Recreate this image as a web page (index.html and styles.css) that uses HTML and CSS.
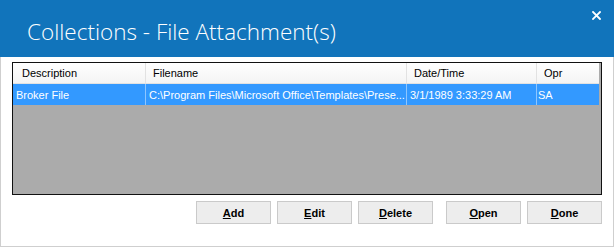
FILE: index.html
```html
<!DOCTYPE html>
<html lang="en">
<head>
  <meta charset="UTF-8">
  <title>Collections - File Attachment(s)</title>
  <link rel="stylesheet" href="styles.css">
</head>
<body>
  <div class="window">
    <div class="titlebar">
      <h1>Collections - File Attachment(s)</h1>
      <span class="close">
        <svg width="9" height="9" viewBox="0 0 9 9">
          <path d="M1 1 L8 8 M8 1 L1 8" stroke="#fff" stroke-width="1.8" stroke-linecap="square"/>
        </svg>
      </span>
    </div>

    <div class="content">
      <div class="listbox">
        <div class="row header">
          <div class="cell c-desc">Description</div>
          <div class="cell c-file">Filename</div>
          <div class="cell c-date">Date/Time</div>
          <div class="cell c-opr">Opr</div>
        </div>
        <div class="row selected">
          <div class="cell c-desc">Broker File</div>
          <div class="cell c-file">C:\Program Files\Microsoft Office\Templates\Prese...</div>
          <div class="cell c-date">3/1/1989 3:33:29 AM</div>
          <div class="cell c-opr">SA</div>
        </div>
      </div>

      <div class="buttons">
        <button><u>A</u>dd</button>
        <button><u>E</u>dit</button>
        <button><u>D</u>elete</button>
        <button class="spaced"><u>O</u>pen</button>
        <button><u>D</u>one</button>
      </div>
    </div>
  </div>
</body>
</html>
```

FILE: styles.css
```css
body {
  margin: 0;
  font-family: 'Liberation Sans', Arial, sans-serif;
  background: #fff;
}
.window {
  width: 614px;
  height: 247px;
  display: flex;
  flex-direction: column;
}
.titlebar {
  height: 57px;
  background: #1174bb;
  display: flex;
  justify-content: space-between;
  align-items: flex-start;
  padding: 0 13px 0 27px;
  box-sizing: border-box;
}
.titlebar h1 {
  margin: 0;
  margin-top: 17px;
  font-family: 'Open Sans', 'Noto Sans', sans-serif;
  font-weight: 300;
  font-size: 22.5px;
  line-height: 30px;
  color: #fff;
  white-space: nowrap;
}
.close {
  display: flex;
  margin-top: 11px;
}
.content {
  flex: 1;
  border: 1px solid #cfcfcf;
  border-top: none;
  padding: 5px 11px 0 11px;
}
.listbox {
  height: 133px;
  box-sizing: border-box;
  border: 1px solid #111;
  background: #ababab;
  padding-right: 2px;
}
.row {
  display: flex;
  font-size: 11px;
}
.header {
  height: 21px;
  background: linear-gradient(#ffffff, #f4f4f4);
  border-bottom: 1px solid #e2e2e2;
  box-sizing: border-box;
  color: #000;
}
.selected {
  height: 21px;
  background: #3399ff;
  color: #fff;
}
.cell {
  display: flex;
  align-items: center;
  padding-left: 3px;
  white-space: nowrap;
  overflow: hidden;
  box-sizing: border-box;
}
.header .cell {
  padding-left: 7px;
  border-right: 1px solid #e2e2e2;
}
.header .c-desc {
  padding-left: 9px;
}
.selected .cell {
  border-right: 1px solid #8ec6ff;
}
.header .c-opr, .selected .c-opr {
  border-right: none;
}
.selected .c-opr {
  padding-left: 1px;
}
.c-desc { width: 133px; }
.c-file { width: 261px; }
.c-date { width: 130px; }
.c-opr { width: 62px; }
.buttons {
  display: flex;
  justify-content: flex-end;
  gap: 6px;
  margin-top: 6px;
}
.buttons button {
  width: 75px;
  height: 23px;
  background: #ededed;
  border: 1px solid #cacaca;
  font-family: 'Liberation Sans', Arial, sans-serif;
  font-weight: bold;
  font-size: 11px;
  color: #000;
  padding: 0;
}
.buttons .spaced {
  margin-left: 7px;
}
```
